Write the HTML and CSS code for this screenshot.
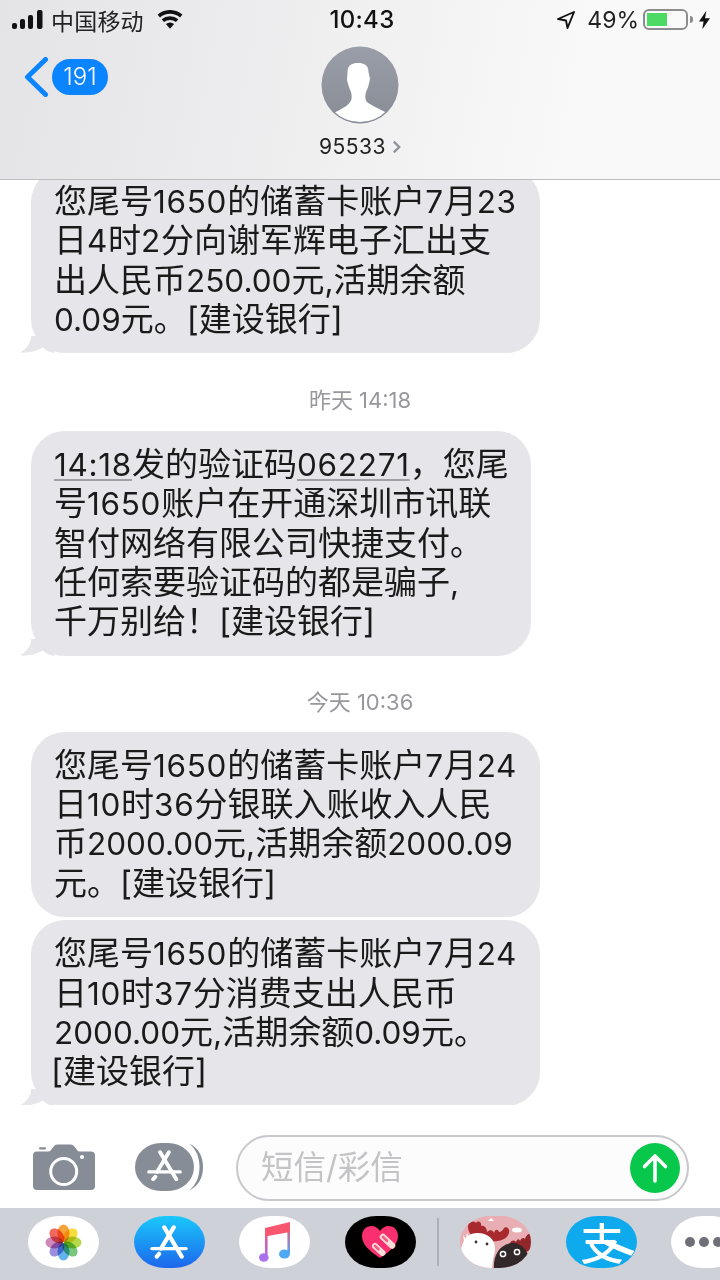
FILE: index.html
```html
<!DOCTYPE html>
<html lang="zh-CN">
<head>
<meta charset="utf-8">
<title>信息</title>
<link rel="stylesheet" href="styles.css">
</head>
<body>
<svg class="defs" width="0" height="0" aria-hidden="true">
  <defs>
    <symbol id="tail" viewBox="0 0 34 17">
      <path d="M11 0 L11 3 C10 8 6 13 0 16.600 C8 17 16 15.500 23 11.500 C26 14.500 30 16.500 34 17 L34 0 Z"/>
    </symbol>
    <symbol id="appa" viewBox="0 0 40 36">
      <g fill="none" stroke="currentColor" stroke-linecap="round" stroke-width="4.400">
        <path d="M25 2.500 L11.500 25"/>
        <path d="M15 2.500 L33.500 33.500"/>
        <path d="M2 25 L38 25" stroke-width="3.600"/>
        <path d="M9.500 30.500 L7 33.500"/>
      </g>
    </symbol>
    <linearGradient id="noteGrad" x1="0" y1="1" x2="0" y2="0">
      <stop offset="0" stop-color="#a86fe8"/>
      <stop offset="1" stop-color="#f4557c"/>
    </linearGradient>
    <linearGradient id="noteGradB" x1="0" y1="1" x2="0" y2="0">
      <stop offset="0" stop-color="#55a6f3"/>
      <stop offset="1" stop-color="#f4557c"/>
    </linearGradient>
    <linearGradient id="avatarGrad" x1="0" y1="0" x2="0" y2="1">
      <stop offset="0" stop-color="#9a9ea8"/>
      <stop offset="1" stop-color="#888c95"/>
    </linearGradient>
  </defs>
</svg>

<main class="phone">
  <header class="topbar">
    <div class="status">
      <div class="status-left">
        <svg class="signal" viewBox="0 0 32 20" aria-hidden="true">
          <rect x="0" y="13" width="5" height="6" rx="2"/>
          <rect x="8" y="9" width="5" height="10" rx="2"/>
          <rect x="16" y="5" width="5" height="14" rx="2"/>
          <rect x="25" y="0" width="5.500" height="19" rx="2"/>
        </svg>
        <span class="carrier">中国移动</span>
        <svg class="wifi" viewBox="0 0 28 20" aria-hidden="true">
          <path d="M14 19.500 L9.600 14.400 A7 7 0 0 1 18.400 14.400 Z"/>
          <path d="M7.600 12.200 L5 9.200 A14 14 0 0 1 23 9.200 L20.400 12.200 A10 10 0 0 0 7.600 12.200 Z"/>
          <path d="M3.200 7.200 L.6 4.200 A20.500 20.500 0 0 1 27.400 4.200 L24.800 7.200 A16.600 16.600 0 0 0 3.200 7.200 Z"/>
        </svg>
      </div>
      <div class="clock">10:43</div>
      <div class="status-right">
        <svg class="locate" viewBox="0 0 20 20" aria-hidden="true">
          <path d="M18 2 L2 9 L10 10.500 L11.500 18 Z" fill="none" stroke="#111" stroke-width="1.900" stroke-linejoin="round"/>
        </svg>
        <span class="percent">49%</span>
        <div class="battery"><span class="battery-fill"></span></div>
        <span class="battery-cap"></span>
        <svg class="bolt" viewBox="0 0 12 20" aria-hidden="true">
          <path d="M8 0 L0 11.500 L5 11.500 L3.600 20 L12 8 L6.600 8 Z"/>
        </svg>
      </div>
    </div>
    <nav class="nav">
      <div class="back">
        <svg class="back-arrow" viewBox="0 0 25 40" aria-hidden="true">
          <path d="M21.500 2.500 L3.500 20 L21.500 37.500" fill="none" stroke="#0a84ff" stroke-width="5" stroke-linecap="round" stroke-linejoin="round"/>
        </svg>
        <span class="badge">191</span>
      </div>
      <div class="contact">
        <svg class="avatar" viewBox="0 0 78 78" aria-hidden="true">
          <circle cx="39" cy="39" r="38.500" fill="url(#avatarGrad)"/>
          <clipPath id="avatarClip"><circle cx="39" cy="39" r="37"/></clipPath>
          <path clip-path="url(#avatarClip)" fill="#fff" d="M37 17 C43 17 47.500 19 47.500 26 L49 33 C48 38 47 42 45 46 C44 50 44 54 46 56 C51 60 59 63 66 67 L66 80 L13 80 L13 67 C20 63 27 60 29 56 C31 54 31 50 30 46 C28 42 27 38 26 34 L26.500 26 C26.500 19 31 17 37 17 Z"/>
        </svg>
        <div class="contact-name">95533<svg class="chev" viewBox="0 0 10 16" aria-hidden="true"><path d="M2 2 L8 8 L2 14" fill="none" stroke="#8e939c" stroke-width="2.600"/></svg></div>
      </div>
    </nav>
  </header>

  <section class="messages">
    <div class="bubble bubble-wide bubble-first">
      <p class="line">您尾号<span class="n">1650</span>的储蓄卡账户<span class="n">7</span>月<span class="n">23</span></p>
      <p class="line">日<span class="n">4</span>时<span class="n">2</span>分向谢军辉电子汇出支</p>
      <p class="line">出人民币<span class="d">250.00</span>元<span class="d">,</span>活期余额</p>
      <p class="line"><span class="d">0.09</span>元。[建设银行]</p>
      <svg class="tail" aria-hidden="true"><use href="#tail"/></svg>
    </div>
    <div class="stamp">昨天 14:18</div>
    <div class="bubble bubble-mid">
      <p class="line"><span class="n link">14:18</span>发的验证码<span class="n link">062271</span>，您尾</p>
      <p class="line">号<span class="n">1650</span>账户在开通深圳市讯联</p>
      <p class="line">智付网络有限公司快捷支付。</p>
      <p class="line">任何索要验证码的都是骗子<span class="d">,</span></p>
      <p class="line">千万别给！[建设银行]</p>
      <svg class="tail" aria-hidden="true"><use href="#tail"/></svg>
    </div>
    <div class="stamp stamp-second">今天 10:36</div>
    <div class="bubble bubble-wide">
      <p class="line">您尾号<span class="n">1650</span>的储蓄卡账户<span class="n">7</span>月<span class="n">24</span></p>
      <p class="line">日<span class="n">10</span>时<span class="n">36</span>分银联入账收入人民</p>
      <p class="line">币<span class="d">2000.00</span>元<span class="d">,</span>活期余额<span class="d">2000.09</span></p>
      <p class="line">元。[建设银行]</p>
    </div>
    <div class="bubble bubble-wide bubble-next">
      <p class="line">您尾号<span class="n">1650</span>的储蓄卡账户<span class="n">7</span>月<span class="n">24</span></p>
      <p class="line">日<span class="n">10</span>时<span class="n">37</span>分消费支出人民币</p>
      <p class="line"><span class="d">2000.00</span>元<span class="d">,</span>活期余额<span class="d">0.09</span>元。</p>
      <p class="line line-hang">[建设银行]</p>
      <svg class="tail" aria-hidden="true"><use href="#tail"/></svg>
    </div>
  </section>

  <section class="composer">
    <svg class="camera" viewBox="0 0 62 46" aria-hidden="true">
      <rect x="6" y="3.200" width="7" height="2.200" rx="1" fill="#878d96"/>
      <path fill="#878d96" d="M4 7.500 H15 Q17 7.500 18 6 L21 2 Q22 .5 24 .5 H38 Q40 .5 41 2 L44 6 Q45 7.500 47 7.500 H58 Q62 7.500 62 11.500 V42 Q62 46 58 46 H4 Q0 46 0 42 V11.500 Q0 7.500 4 7.500 Z"/>
      <circle cx="30.700" cy="27.500" r="13" fill="none" stroke="#fff" stroke-width="3"/>
      <circle cx="49" cy="13" r="2" fill="#fff"/>
    </svg>
    <svg class="apps-btn" viewBox="0 0 68 48" aria-hidden="true">
      <rect x="0" y="0" width="59" height="48" rx="26" ry="24" fill="#878d96"/>
      <path d="M54 .5 C64 5 68 14 68 24 C68 34 64 43 54 47.500 C61 42 64.500 34 64.500 24 C64.500 14 61 6 54 .5 Z" fill="#878d96"/>
      <svg class="apps-btn-a" x="12" y="7" width="35" height="31.500"><use href="#appa"/></svg>
    </svg>
    <div class="input">
      <span class="placeholder">短信/彩信</span>
      <span class="send">
        <svg viewBox="0 0 50 50" aria-hidden="true">
          <path d="M25 38 V13 M14.500 23.500 L25 13 L35.500 23.500" fill="none" stroke="#fff" stroke-width="3.600" stroke-linecap="round" stroke-linejoin="round"/>
        </svg>
      </span>
    </div>
  </section>

  <footer class="dock">
    <div class="app app-white">
      <svg class="photos" viewBox="0 0 40 40" aria-hidden="true">
        <ellipse class="petal" cx="20" cy="10" rx="6.500" ry="9.500" fill="#f9a33b"/>
        <ellipse class="petal" cx="20" cy="10" rx="6.500" ry="9.500" fill="#f6dc3e" transform="rotate(45 20 20)"/>
        <ellipse class="petal" cx="20" cy="10" rx="6.500" ry="9.500" fill="#b5d94a" transform="rotate(90 20 20)"/>
        <ellipse class="petal" cx="20" cy="10" rx="6.500" ry="9.500" fill="#77c77d" transform="rotate(135 20 20)"/>
        <ellipse class="petal" cx="20" cy="10" rx="6.500" ry="9.500" fill="#62b2ee" transform="rotate(180 20 20)"/>
        <ellipse class="petal" cx="20" cy="10" rx="6.500" ry="9.500" fill="#9b8fdc" transform="rotate(225 20 20)"/>
        <ellipse class="petal" cx="20" cy="10" rx="6.500" ry="9.500" fill="#cf86b8" transform="rotate(270 20 20)"/>
        <ellipse class="petal" cx="20" cy="10" rx="6.500" ry="9.500" fill="#f0685e" transform="rotate(315 20 20)"/>
      </svg>
    </div>
    <div class="app app-store">
      <svg class="store-a" aria-hidden="true"><use href="#appa"/></svg>
    </div>
    <div class="app app-white">
      <svg class="music" viewBox="0 0 31 40" aria-hidden="true">
        <rect x="6" y="7" width="2.600" height="29" fill="url(#noteGrad)"/>
        <rect x="28.400" y="2" width="2.600" height="30" fill="url(#noteGradB)"/>
        <path d="M6 6 L31 0 V10 L6 14.500 Z" fill="#f9566f"/>
        <ellipse cx="4.800" cy="35.500" rx="4.800" ry="4.300" fill="#a870ea"/>
        <ellipse cx="25.500" cy="32" rx="5.500" ry="4.500" fill="#4fa8f5"/>
      </svg>
    </div>
    <div class="app app-black">
      <svg class="heart" viewBox="0 0 36 32" aria-hidden="true">
        <path d="M18 32 C7 25 0 18 0 10 C0 4 4 0 9.500 0 C13 0 16 2 18 5 C20 2 23 0 26.500 0 C32 0 36 4 36 10 C36 18 29 25 18 32 Z" fill="#f92f6f"/>
        <g fill="none" stroke-linecap="round">
          <path d="M21 11 L30 19.500" stroke="#fbdcd6" stroke-width="6.500"/>
          <path d="M21 11 L25 14.800" stroke="#f25c86" stroke-width="2.600"/>
          <path d="M13 20 L20.500 27" stroke="#fbdcd6" stroke-width="6"/>
          <path d="M13 20 L16.500 23.300" stroke="#f25c86" stroke-width="2.600"/>
        </g>
      </svg>
    </div>
    <span class="divider"></span>
    <div class="app app-moose">
      <svg class="moose" viewBox="0 0 71 52" aria-hidden="true">
        <rect width="71" height="52" fill="#e9aeb3"/>
        <path d="M8 11 C8 6 13 4 16 7 C18 4 22 6 21 10 C24 9 27 12 27 16 C30 13 33 14 34 17 C35 13 38 13 39 16 C41 16 43 14 44 12 C47 10 50 13 49 17 C47 24 38 26 30 25 L17 24 C12 21 8 16 8 11 Z" fill="#a92a2e"/>
        <path d="M50 27 C52 24 54 24 56 26 C57 23 59 22 60 25 C62 21 64 22 65 23 C66 19 69 17 71 18 L71 33 L63 38 L54 34 Z" fill="#92272a"/>
        <path d="M1 36 C1 28 6 17 17 17 C28 17 35 23 35 33 C35 38 33 40 32 52 L9 52 C4 47 1 42 1 36 Z" fill="#fff"/>
        <path d="M4 25 L3 19 L6 23 L7 17 L9 22 L12 26 L6 31 Z" fill="#fff"/>
        <path d="M34 52 C33 42 38 29 51 27 C60 26 68 33 69 44 L66 52 Z" fill="#31282a"/>
        <circle cx="43" cy="38" r="2.600" fill="none" stroke="#fff" stroke-width="1.500"/>
        <circle cx="57" cy="36" r="2.600" fill="none" stroke="#fff" stroke-width="1.500"/>
        <circle cx="16" cy="26" r="1.400" fill="#333"/>
        <circle cx="27" cy="28" r="1.400" fill="#333"/>
        <ellipse cx="57" cy="14" rx="5" ry="2.500" fill="#fff"/>
        <path d="M31 2 L34 5 L28 5 Z" fill="#fff"/>
      </svg>
    </div>
    <div class="app app-alipay">
      <span class="alipay-char">支</span>
      <svg class="alipay-swoosh" viewBox="0 0 71 52" aria-hidden="true">
        <path d="M40 26 C50 31 60 35 71 39" fill="none" stroke="#fff" stroke-width="5.500"/>
      </svg>
    </div>
    <div class="app app-white app-more">
      <span class="dot"></span><span class="dot"></span><span class="dot"></span>
    </div>
  </footer>
</main>
</body>
</html>
```

FILE: styles.css
```css
* { box-sizing: border-box; }
html, body { margin: 0; padding: 0; background: #fff; }
body {
  width: 720px;
  height: 1280px;
  overflow: hidden;
  font-family: Inter, "Noto Sans CJK SC", sans-serif;
  color: #111;
}
.defs { display: block; position: absolute; }
.phone {
  width: 720px;
  height: 1280px;
  display: flex;
  flex-direction: column;
  overflow: hidden;
}

/* top */
.topbar {
  height: 180px;
  flex: none;
  position: relative;
  z-index: 2;
  background: linear-gradient(100deg, #e4e4e7 0%, #efeff0 45%, #f9f9f9 80%, #f9f9f9 100%);
  border-bottom: 1.500px solid #bdbdc0;
  padding-top: 1px;
}
.status {
  display: grid;
  grid-template-columns: 1fr auto 1fr;
  align-items: center;
  height: 37px;
  padding: 0 10px 0 12px;
}
.status-left { display: flex; align-items: center; }
.signal { width: 32px; height: 20px; fill: #111; }
.carrier { font-size: 23px; margin-left: 7px; color: #222; letter-spacing: .2px; }
.wifi { width: 26px; height: 20px; margin-left: 13px; fill: #111; }
.clock { font-size: 24px; font-weight: 500; letter-spacing: .3px; padding-left: 2px; }
.status-right { display: flex; align-items: center; justify-content: flex-end; }
.locate { width: 20px; height: 20px; }
.percent { font-size: 23px; margin-left: 11px; color: #222; }
.battery {
  width: 45px;
  height: 21px;
  margin-left: 4px;
  border: 2px solid #8c8c8e;
  border-radius: 6px;
  padding: 2px;
}
.battery-fill { display: block; width: 20px; height: 100%; background: #4cd964; }
.battery-cap { width: 3px; height: 7px; margin-left: 2px; background: #8c8c8e; border-radius: 0 3px 3px 0; }
.bolt { width: 11px; height: 20px; margin-left: 6px; fill: #111; }

.nav {
  display: grid;
  grid-template-columns: 1fr auto 1fr;
  padding-top: 8px;
}
.back { display: flex; align-items: flex-start; padding: 11px 0 0 24px; }
.back-arrow { width: 25px; height: 40px; }
.badge {
  width: 56px;
  height: 36px;
  margin: 2px 0 0 3px;
  border-radius: 18px;
  background: #0a84ff;
  color: #fff;
  font-size: 24px;
  font-weight: 300;
  line-height: 36px;
  text-align: center;
}
.contact { display: flex; flex-direction: column; align-items: center; }
.avatar { width: 78px; height: 78px; display: block; }
.contact-name {
  display: flex;
  align-items: center;
  font-size: 21px;
  line-height: 26px;
  margin-top: 10px;
  letter-spacing: .5px;
  color: #222;
}
.chev { width: 9px; height: 16px; margin-left: 6px; }

/* messages */
.messages {
  flex: 1;
  min-height: 0;
  overflow: hidden;
  padding-left: 31px;
  background: #fff;
}
.bubble {
  position: relative;
  background: #e5e5ea;
  border-radius: 34px;
  padding: 14px 0 14px 23px;
}
.bubble-wide { width: 509px; }
.bubble-mid { width: 500px; }
.bubble-first { margin-top: -12px; }
.bubble-next { margin-top: 3.500px; }
.line {
  margin: 0;
  font-size: 33px;
  line-height: 39.300px;
  height: 39.300px;
  white-space: nowrap;
  color: #1a1a1a;
}
.line-hang { margin-left: -3px; }
.n { font-size: 31.500px; line-height: 1; letter-spacing: .7px; }
.d { font-size: 31.500px; line-height: 1; }
.link {
  text-decoration: underline;
  text-decoration-color: #a0a0a5;
  text-decoration-thickness: 1.500px;
  text-underline-offset: 3px;
}
.tail {
  position: absolute;
  left: -11px;
  bottom: 0;
  width: 34px;
  height: 17px;
  fill: #e5e5ea;
}
.stamp {
  height: 78px;
  margin-left: -31px;
  padding-top: 34px;
  text-align: center;
  font-size: 22px;
  line-height: 26px;
  color: #98989c;
}
.stamp-second { height: 76px; padding-top: 33px; }

/* composer */
.composer {
  flex: none;
  height: 103px;
  display: flex;
  align-items: flex-start;
  background: #fff;
  padding-left: 33px;
}
.camera { width: 62px; height: 46px; margin-top: 39px; flex: none; }
.apps-btn {
  width: 68px;
  height: 48px;
  margin: 38px 0 0 40px;
  flex: none;
  color: #fff;
}
.input {
  width: 453px;
  height: 66px;
  margin: 30px 0 0 33px;
  flex: none;
  border: 2px solid #c8c8cc;
  border-radius: 33px;
  background: #fcfcfc;
  display: flex;
  align-items: center;
  justify-content: space-between;
  padding: 0 7px 0 23px;
}
.placeholder { font-size: 32.500px; line-height: 44px; color: #c4c4c6; }
.send {
  width: 50px;
  height: 50px;
  border-radius: 50%;
  background: #07c84a;
  display: block;
}
.send svg { width: 50px; height: 50px; display: block; }

/* dock */
.dock {
  flex: none;
  height: 72px;
  background: #cfd1d8;
  display: flex;
  align-items: flex-start;
  padding: 8px 0 0 28px;
  gap: 34.600px;
}
.app {
  position: relative;
  flex: none;
  width: 71px;
  height: 52px;
  border-radius: 44% / 50%;
  overflow: hidden;
  display: flex;
  align-items: center;
  justify-content: center;
}
.app-white { background: #fff; }
.app-store { background: linear-gradient(180deg, #1ac8fb, #1d66ec); color: #fff; }
.app-black { background: #000; }
.app-moose { background: #e9aeb3; margin-left: -14px; }
.app-alipay { background: #0fa9ee; overflow: visible; }
.divider { flex: none; width: 2px; height: 48px; margin: 2px 0 0 -13px; background: #adafb6; }
.photos { width: 37px; height: 37px; }
.petal { mix-blend-mode: multiply; }
.store-a { width: 38px; height: 34px; }
.music { width: 31px; height: 40px; }
.heart { width: 36px; height: 32px; }
.moose { width: 71px; height: 52px; display: block; }
.alipay-char { font-family: "Noto Sans CJK SC", sans-serif; font-size: 43px; font-weight: 500; line-height: 50px; color: #fff; margin: -2px 0 0 2px; }
.alipay-swoosh { position: absolute; left: 0; top: 0; width: 71px; height: 52px; clip-path: ellipse(50% 50%); }
.app-more { gap: 4px; justify-content: flex-start; padding-left: 14px; }
.dot { width: 10px; height: 10px; flex: none; border-radius: 50%; background: #6f6f77; }
```
